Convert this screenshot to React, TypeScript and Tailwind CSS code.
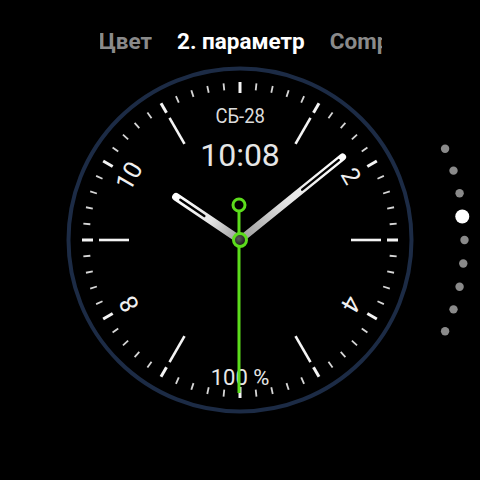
const HOURS_WITH_NUMERALS: Record<number, string> = { 2: '2', 4: '4', 8: '8', 10: '10' }
const LONG_HOUR_TICKS = [1, 3, 5, 7, 9, 11]

function polar(r: number, deg: number) {
  const a = (deg * Math.PI) / 180
  return { x: Math.sin(a) * r, y: -Math.cos(a) * r }
}

function Tick({ deg, r1, r2, w, color }: { deg: number; r1: number; r2: number; w: number; color: string }) {
  const a = polar(r1, deg)
  const b = polar(r2, deg)
  return <line x1={a.x} y1={a.y} x2={b.x} y2={b.y} stroke={color} strokeWidth={w} />
}

function Hand({ deg, length, width, slotFrom, slotTo, id }: { deg: number; length: number; width: number; slotFrom: number; slotTo: number; id: string }) {
  return (
    <g transform={`rotate(${deg})`}>
      <defs>
        <linearGradient id={id} gradientUnits="userSpaceOnUse" x1="0" y1="0" x2="0" y2={-length}>
          <stop offset="0" stopColor="#999999" />
          <stop offset="0.45" stopColor="#e4e4e4" />
          <stop offset="1" stopColor="#ffffff" />
        </linearGradient>
      </defs>
      <line x1="0" y1="0" x2="0" y2={-length} stroke={`url(#${id})`} strokeWidth={width} strokeLinecap="round" />
      <line x1="0" y1={-slotFrom} x2="0" y2={-slotTo} stroke="#000" strokeWidth={2.4} strokeLinecap="round" />
    </g>
  )
}

function DialFace() {
  const minutes = Array.from({ length: 60 }, (_, i) => i)
  return (
    <svg viewBox="-175 -175 350 350" className="absolute inset-0 w-full h-full">
      <circle r="171.5" fill="#000" stroke="#1c2b45" strokeWidth="4" />
      {minutes.map((i) =>
        i % 5 === 0 ? (
          <Tick key={i} deg={i * 6} r1={147} r2={158} w={3} color="#f4f4f4" />
        ) : (
          <Tick key={i} deg={i * 6} r1={150.5} r2={157.5} w={1.8} color="#d6d6d6" />
        ),
      )}
      {LONG_HOUR_TICKS.map((h) => (
        <Tick key={h} deg={h * 30} r1={111} r2={141} w={2.6} color="#f4f4f4" />
      ))}
      {Object.entries(HOURS_WITH_NUMERALS).map(([h, label]) => {
        const deg = Number(h) * 30
        const p = polar(128, deg)
        return (
          <text
            key={h}
            x={p.x}
            y={p.y}
            transform={`rotate(${deg} ${p.x} ${p.y})`}
            textAnchor="middle"
            dominantBaseline="central"
            fill="#f0f0f0"
            fontSize="25"
            fontFamily="Roboto, sans-serif"
          >
            {label}
          </text>
        )
      })}
    </svg>
  )
}

function Hands() {
  return (
    <svg viewBox="-175 -175 350 350" className="absolute inset-0 w-full h-full">
      <defs>
        <radialGradient id="cap" cx="0.4" cy="0.4" r="0.6">
          <stop offset="0" stopColor="#5a5a5a" />
          <stop offset="1" stopColor="#141414" />
        </radialGradient>
      </defs>
      <Hand id="hourGrad" deg={304} length={77} width={8} slotFrom={43} slotTo={72} />
      <Hand id="minGrad" deg={51} length={132} width={7} slotFrom={80} slotTo={127} />
      <g transform="translate(-1 0)">
        <line x1="0" y1="-29" x2="0" y2="153" stroke="#5cdc1c" strokeWidth="3" />
        <circle cx="0" cy="-35" r="6" fill="#000" stroke="#5cdc1c" strokeWidth="3" />
      </g>
      <circle r="6.5" fill="url(#cap)" stroke="#5cdc1c" strokeWidth="3" />
    </svg>
  )
}

function PageDots() {
  const dots = Array.from({ length: 9 }, (_, i) => -24 + i * 6)
  return (
    <svg viewBox="430 135 45 210" className="absolute left-[430px] top-[135px] w-[45px] h-[210px]">
      {dots.map((deg, i) => {
        const a = (deg * Math.PI) / 180
        const x = 240 + Math.cos(a) * 224.5
        const y = 240 + Math.sin(a) * 224.5
        return i === 3 ? (
          <circle key={i} cx={x - 1} cy={y} r="7" fill="#ffffff" />
        ) : (
          <circle key={i} cx={x} cy={y} r="4.2" fill="#8a8a8a" />
        )
      })}
    </svg>
  )
}

export default function App() {
  return (
    <div className="relative w-[480px] h-[480px] bg-black overflow-hidden" style={{ fontFamily: 'Roboto, "Noto Sans", sans-serif' }}>
      <header className="h-[65px] pt-[28px]">
        <div className="ml-[100px] w-[282px] grid grid-cols-[52px_auto_1fr] gap-x-[25px] text-[22.5px] font-bold leading-[26px] whitespace-nowrap">
          <div className="flex justify-end overflow-hidden text-[#8a8a8a]">Цвет</div>
          <div className="text-white">2. параметр</div>
          <div className="flex justify-start overflow-hidden text-[#8a8a8a]">Complication</div>
        </div>
      </header>

      <div className="relative mx-auto w-[350px] h-[350px]">
        <DialFace />
        <div className="absolute inset-0 flex flex-col items-center">
          <div className="mt-[38px] h-[26px] leading-[26px] text-[21px] text-[#dcdcdc] scale-x-[0.88]">СБ-28</div>
          <div className="mt-[8px] h-[36px] leading-[36px] text-[32px] text-[#e6e6e6]">10:08</div>
          <div className="mt-[192px] h-[26px] leading-[26px] text-[22px] text-[#e8e8e8]">100 %</div>
        </div>
        <Hands />
      </div>

      <PageDots />
    </div>
  )
}
